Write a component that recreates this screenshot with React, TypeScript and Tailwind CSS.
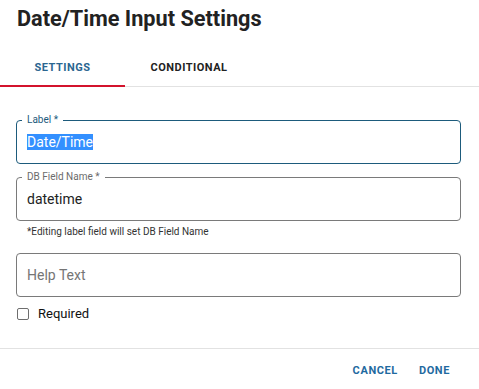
import React from 'react';

const font = { fontFamily: 'Roboto, "Liberation Sans", sans-serif' };

const OutlinedField = ({
  label,
  focused,
  children,
}: {
  label?: string;
  focused?: boolean;
  children: React.ReactNode;
}) => (
  <div
    className={`relative ml-4 mr-[18px] h-[44px] rounded-[4px] border flex items-center px-[10px] ${
      focused ? 'border-[#1d5b7c]' : 'border-[#7a7a7a]'
    }`}
  >
    {label && (
      <span
        className={`absolute left-[5px] top-[-8px] bg-white px-[5px] text-[10px] leading-[14px] ${
          focused ? 'text-[#1d5b7c]' : 'text-[#6b6b6b]'
        }`}
      >
        {label}
      </span>
    )}
    {children}
  </div>
);

const App = () => {
  return (
    <div className="w-[479px] h-[389px] bg-white text-[#222]" style={font}>
      <h2 className="pl-[17px] pt-[5px] text-[21.7px] font-bold leading-[28px] text-[#222]">
        Date/Time Input Settings
      </h2>

      <div className="mt-[5px] flex border-b border-[#e2e2e2]">
        <button className="relative flex h-[48px] w-[125px] items-center justify-center pt-[12px] text-[11px] font-bold tracking-[0.5px] text-[#2a6690]">
          SETTINGS
          <span className="absolute bottom-[-1px] left-0 right-0 h-[2px] bg-[#d3132c]" />
        </button>
        <button className="flex h-[48px] w-[128px] items-center justify-center pt-[12px] text-[11px] font-bold tracking-[0.5px] text-[#222]">
          CONDITIONAL
        </button>
      </div>

      <div className="pt-[33px]">
        <OutlinedField label="Label *" focused>
          <span className="text-[14px] leading-[16px]">
            <span className="bg-[#3390ff] text-white">Date/Time</span>
          </span>
        </OutlinedField>

        <div className="mt-[13px]">
          <OutlinedField label="DB Field Name *">
            <span className="text-[14px] text-[#222]">datetime</span>
          </OutlinedField>
        </div>
        <p className="pl-[27px] pt-[4px] text-[10px] leading-[14px] text-[#333]">
          *Editing label field will set DB Field Name
        </p>

        <div className="mt-[14px]">
          <OutlinedField>
            <span className="text-[14px] text-[#757575]">Help Text</span>
          </OutlinedField>
        </div>

        <label className="mt-[7px] ml-[17px] flex items-center gap-[9px]">
          <span className="h-[12px] w-[12px] rounded-[2px] border border-[#6e6e6e]" />
          <span className="text-[13px] text-[#111]">Required</span>
        </label>
      </div>

      <div className="mt-[24px] flex justify-end gap-[21px] border-t border-[#e2e2e2] pr-[29px] pt-[14px]">
        <button className="text-[11px] font-bold tracking-[0.6px] text-[#1f6aa0]">CANCEL</button>
        <button className="text-[11px] font-bold tracking-[0.6px] text-[#1f6aa0]">DONE</button>
      </div>
    </div>
  );
};

export default App;
